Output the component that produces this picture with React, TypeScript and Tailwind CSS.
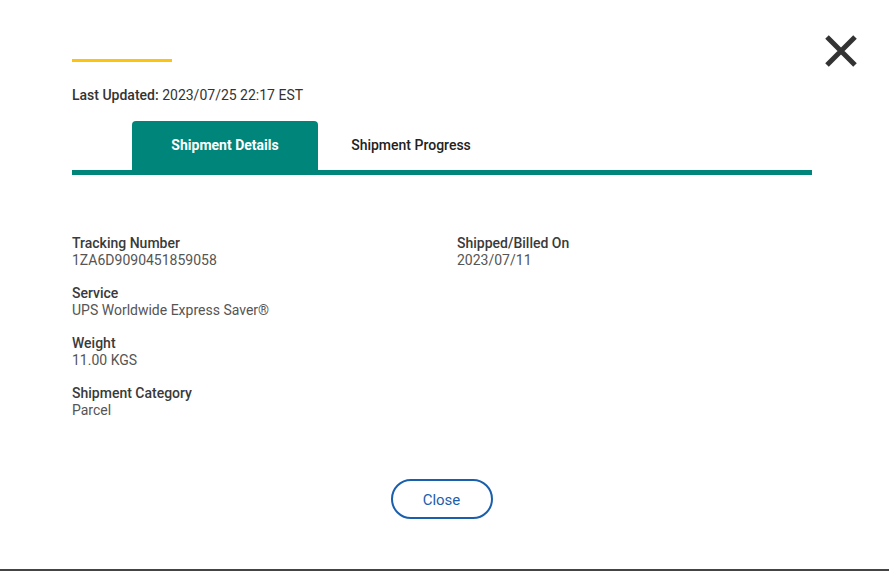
import React from 'react';

const fields = [
  { label: 'Tracking Number', value: '1ZA6D9090451859058' },
  { label: 'Service', value: 'UPS Worldwide Express Saver®' },
  { label: 'Weight', value: '11.00 KGS' },
  { label: 'Shipment Category', value: 'Parcel' },
];

function Field({ label, value }: { label: string; value: string }) {
  return (
    <div className="flex flex-col">
      <span className="text-[14px] leading-[17px] font-medium text-[#3a3a3a]">{label}</span>
      <span className="text-[14px] leading-[17px] text-[#555]">{value}</span>
    </div>
  );
}

export default function App() {
  return (
    <div
      className="w-[889px] h-[571px] bg-white flex flex-col border-b-2 border-[#444] overflow-hidden"
      style={{ fontFamily: 'Roboto, "Liberation Sans", sans-serif' }}
    >
      <div className="flex pl-[72px] pr-[30px] pt-[36px]">
        <div className="flex-1 flex flex-col">
          <div className="mt-[23px] w-[100px] h-[3px] bg-[#fcc40f]" />
          <div className="mt-[23px] text-[14px] leading-[20px] text-[#333]">
            <span className="font-medium">Last Updated:</span> 2023/07/25 22:17 EST
          </div>
        </div>
        <button className="w-[36px] h-[36px] mt-[-3px] flex items-center justify-center">
          <svg width="34" height="34" viewBox="0 0 34 34">
            <path d="M3 3 L31 31 M31 3 L3 31" stroke="#333" strokeWidth="5" strokeLinecap="butt" />
          </svg>
        </button>
      </div>

      <div className="ml-[72px] w-[740px] mt-[16px] flex flex-col">
        <div className="flex pl-[60px]">
          <div className="w-[186px] h-[49px] bg-[#00857a] rounded-t-[4px] flex items-center justify-center text-white text-[14px] font-bold">
            Shipment Details
          </div>
          <div className="w-[186px] h-[49px] flex items-center justify-center text-[#222] text-[14px] font-medium">
            Shipment Progress
          </div>
        </div>
        <div className="h-[5px] bg-[#00857a]" />
      </div>

      <div className="ml-[72px] mt-[60px] grid grid-cols-[385px_1fr]">
        <div className="flex flex-col gap-[16px]">
          {fields.map((f) => (
            <Field key={f.label} label={f.label} value={f.value} />
          ))}
        </div>
        <div className="flex flex-col">
          <Field label="Shipped/Billed On" value="2023/07/11" />
        </div>
      </div>

      <div className="flex justify-center mt-[60px] pr-[6px]">
        <button className="w-[102px] h-[40px] rounded-full border-2 border-[#1a5fac] text-[#1a5fac] text-[15px] leading-[20px] pt-[1px]">
          Close
        </button>
      </div>
    </div>
  );
}
